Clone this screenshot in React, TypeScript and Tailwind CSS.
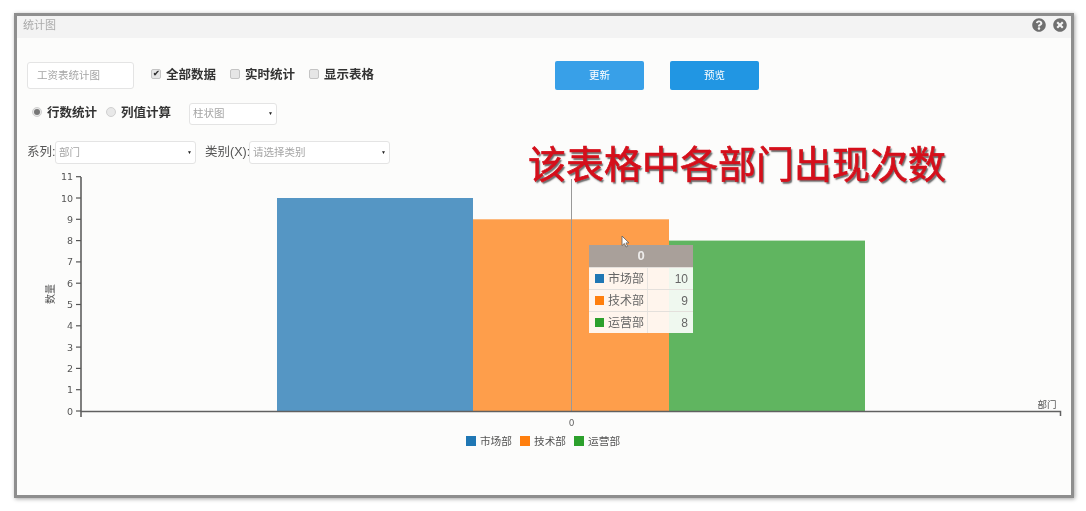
import { FaQuestionCircle, FaTimesCircle } from 'react-icons/fa';

const FONT = '[font-family:"Liberation_Sans","Noto_Sans_CJK_SC",sans-serif]';

const TICKS = [0, 1, 2, 3, 4, 5, 6, 7, 8, 9, 10, 11];
const BASE_Y = 410;
const STEP = 21.3;

const BARS = [
  { x: 277, w: 196, v: 10, fill: '#5596c4' },
  { x: 473, w: 196, v: 9, fill: '#fe9e4b' },
  { x: 669, w: 196, v: 8, fill: '#60b560' },
];

const SERIES = [
  { name: '市场部', value: 10, color: 'bg-[#1f77b4]' },
  { name: '技术部', value: 9, color: 'bg-[#ff7f0e]' },
  { name: '运营部', value: 8, color: 'bg-[#2ca02c]' },
];

function Check({ label, checked }: { label: string; checked?: boolean }) {
  return (
    <label className="flex items-center gap-[5px] text-[12.5px] font-bold text-[#333]">
      <span className="mb-[3px] flex h-[10px] w-[10px] items-center justify-center rounded-[2px] border border-[#c4c4c4] bg-[#e6e6e6] text-[8px] leading-none text-[#333]">
        {checked ? '✔' : ''}
      </span>
      {label}
    </label>
  );
}

function Radio({ label, checked }: { label: string; checked?: boolean }) {
  return (
    <label className="flex items-center gap-[5px] text-[12.5px] font-bold text-[#333]">
      <span className="mb-[3px] flex h-[10px] w-[10px] items-center justify-center rounded-full border border-[#d0d0d0] bg-[#e8e8e8]">
        {checked && <span className="h-[6px] w-[6px] rounded-full bg-[#777]" />}
      </span>
      {label}
    </label>
  );
}

function Select({ text, className }: { text: string; className: string }) {
  return (
    <div
      className={`flex items-center justify-between rounded-[3px] border border-[#e4e4e4] bg-white pl-[3px] pr-[3px] text-[10.5px] text-[#a5a5a5] ${className}`}
    >
      <span>{text}</span>
      <span className="text-[5px] text-[#222]">▼</span>
    </div>
  );
}

function Chart() {
  return (
    <svg width="1053" height="262" viewBox="17 168 1053 262" className="block">
      {BARS.map((b) => (
        <rect key={b.x} x={b.x} y={BASE_Y - b.v * STEP} width={b.w} height={b.v * STEP} fill={b.fill} />
      ))}
      <line x1="571.5" y1="178" x2="571.5" y2={BASE_Y} stroke="#999" strokeWidth="1" />
      <path d={`M81 ${BASE_Y + 0.5}H1060.5V415`} fill="none" stroke="#606060" strokeWidth="1.5" />
      <line x1="81" y1="176" x2="81" y2="416" stroke="#606060" strokeWidth="1.6" />
      {TICKS.map((t) => {
        const y = BASE_Y - t * STEP;
        return (
          <g key={t}>
            <line x1="76" y1={y} x2="81" y2={y} stroke="#555" strokeWidth="1.2" />
            <text x="73" y={y + 3.5} textAnchor="end" fontSize="9.5" fill="#555" fontFamily="DejaVu Sans">
              {t}
            </text>
          </g>
        );
      })}
      <text x="571.5" y="425" textAnchor="middle" fontSize="9" fill="#666" fontFamily="DejaVu Sans">
        0
      </text>
      <text x="1047" y="407" textAnchor="middle" fontSize="9.5" fill="#555" fontFamily="Noto Sans CJK SC">
        部门
      </text>
      <text
        transform="translate(54 293) rotate(-90)"
        textAnchor="middle"
        fontSize="10"
        fill="#555"
        fontFamily="Noto Sans CJK SC"
      >
        数量
      </text>
    </svg>
  );
}

export default function App() {
  return (
    <div className={`h-[511px] w-[1086px] overflow-hidden bg-white pl-[14px] pt-[13px] blur-[0.3px] ${FONT}`}>
      <div className="relative h-[485px] w-[1060px] border-[3px] border-[#8e8e8e] bg-[#fcfcfb] shadow-[1px_1px_4px_rgba(0,0,0,0.35)]">
        {/* title bar */}
        <div className="flex h-[22px] items-center justify-between bg-[#f3f3f3] pb-[4px] pl-[6px] pr-[4px]">
          <span className="text-[11px] text-[#aaa]">统计图</span>
          <div className="flex items-center gap-[7px] text-[14px] text-[#6f6f6f]">
            <FaQuestionCircle />
            <FaTimesCircle />
          </div>
        </div>

        {/* toolbar */}
        <div className="mt-[23px] flex h-[29px] items-center pl-[10px]">
          <div className="flex h-[27px] w-[107px] items-center rounded-[3px] border border-[#e4e4e4] bg-white pl-[9px] text-[10.5px] text-[#a5a5a5]">
            工资表统计图
          </div>
          <div className="ml-[17px] flex items-center gap-[14px]">
            <Check label="全部数据" checked />
            <Check label="实时统计" />
            <Check label="显示表格" />
          </div>
          <button className="ml-[181px] h-[29px] w-[89px] rounded-[2px] bg-[#38a0e8] text-[10.5px] text-white">
            更新
          </button>
          <button className="ml-[26px] h-[29px] w-[89px] rounded-[2px] bg-[#2196e3] text-[10.5px] text-white">
            预览
          </button>
        </div>

        <div className="mt-[12px] flex h-[23px] items-center pl-[15px]">
          <div className="flex items-center gap-[9px]">
            <Radio label="行数统计" checked />
            <Radio label="列值计算" />
          </div>
          <Select text="柱状图" className="ml-[18px] h-[22px] w-[88px]" />
        </div>

        <div className="mt-[16px] flex h-[23px] items-center pl-[10px] text-[12.5px] text-[#555]">
          <span className="w-[28px] whitespace-nowrap">系列:</span>
          <Select text="部门" className="h-[23px] w-[141px]" />
          <span className="ml-[9px] w-[44px] whitespace-nowrap">类别(X):</span>
          <Select text="请选择类别" className="h-[23px] w-[141px]" />
        </div>

        <div className="mt-[5px]">
          <Chart />
        </div>

        {/* legend */}
        <div className="mt-[2px] flex items-center justify-center gap-[8px] pr-[2px] text-[10.7px] text-[#555]">
          {SERIES.map((s) => (
            <div key={s.name} className="flex items-center gap-[4px]">
              <span className={`h-[10px] w-[10px] ${s.color}`} />
              {s.name}
            </div>
          ))}
        </div>

        {/* annotation over the chart */}
        <div className="absolute left-[511px] top-[127px] whitespace-nowrap text-[38px] font-normal leading-none text-[#d50f1b] [-webkit-text-stroke:0.7px_#d50f1b] [font-family:'Noto_Sans_CJK_SC',sans-serif] [text-shadow:1.5px_1.5px_1.5px_#666]">
          该表格中各部门出现次数
        </div>

        {/* tooltip */}
        <div className="absolute left-[572px] top-[229px] w-[104px] bg-white/90 text-[12px] text-[#666]">
          <div className="flex h-[22px] items-center justify-center bg-[#a9a09a] text-[13px] font-bold text-white/80">
            0
          </div>
          {SERIES.map((s) => (
            <div key={s.name} className="flex h-[22px] items-center border-t border-[#e4e0dc]">
              <div className="flex h-full w-[59px] items-center gap-[4px] border-r border-[#e8e4e0] pl-[6px]">
                <span className={`h-[9px] w-[9px] ${s.color}`} />
                {s.name}
              </div>
              <div className="flex-1 pr-[5px] text-right">{s.value}</div>
            </div>
          ))}
        </div>

        {/* mouse pointer */}
        <svg className="absolute left-[604px] top-[219px]" width="10" height="13" viewBox="0 0 10 13">
          <path d="M1 1v9.5l2.4-2 1.6 3.5 1.6-.7-1.6-3.4h3z" fill="#fff" stroke="#666" strokeWidth="0.9" />
        </svg>
      </div>
    </div>
  );
}
